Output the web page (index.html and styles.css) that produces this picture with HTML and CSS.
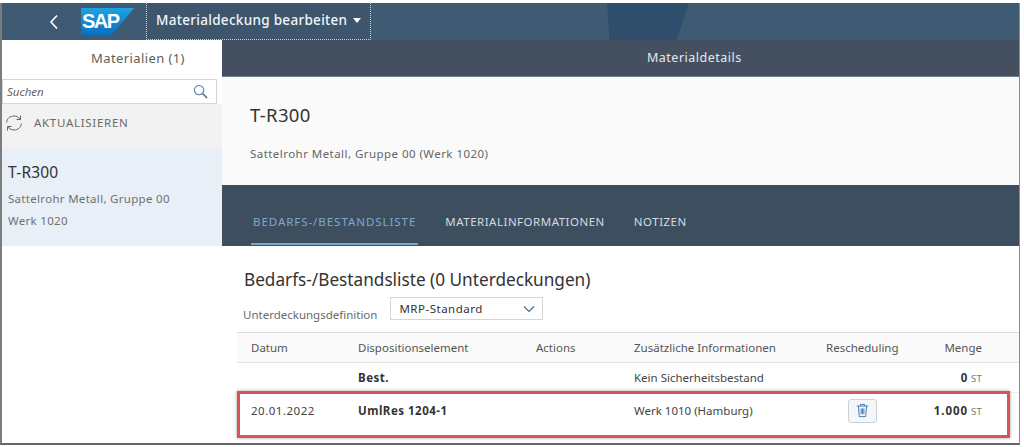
FILE: index.html
```html
<!DOCTYPE html>
<html lang="de">
<head>
<meta charset="utf-8">
<title>Materialdeckung bearbeiten</title>
<link rel="stylesheet" href="styles.css">
</head>
<body>
<div class="frame">
  <header class="shell">
    <svg class="back" viewBox="0 0 10 16" width="10" height="16"><path d="M8 1.500 2 8l6 6.500" fill="none" stroke="#fff" stroke-width="1.600"/></svg>
    <div class="logo"><span class="logo-text">SAP</span></div>
    <div class="app-title">Materialdeckung bearbeiten <span class="caret"></span></div>
    <div class="shell-deco"></div>
  </header>
  <div class="main">
    <aside class="master">
      <div class="master-head">Materialien (1)</div>
      <div class="search">
        <span class="search-text">Suchen</span>
        <svg class="search-icon" viewBox="0 0 16 16" width="15" height="15"><circle cx="6.500" cy="6.500" r="5" fill="none" stroke="#4a7ba6" stroke-width="1.100"/><path d="M10.200 10.200 15 15" stroke="#4a6a85" stroke-width="1.600"/></svg>
      </div>
      <div class="refresh">
        <svg class="refresh-icon" viewBox="0 0 20 20" width="20" height="20"><path d="M2.500 9.500C3 5.500 6 3 10 3c2.700 0 4.800 1.200 6 3.300M17.500 10.500C17 14.500 14 17 10 17c-2.700 0-4.800-1.200-6-3.300" fill="none" stroke="#666" stroke-width="1"/><path d="M16.500 2.500V6.500H12.500M3.500 17.500V13.500H7.500" fill="none" stroke="#666" stroke-width="1"/></svg>
        <span>AKTUALISIEREN</span>
      </div>
      <div class="item">
        <div class="item-title">T-R300</div>
        <div class="item-line">Sattelrohr Metall, Gruppe 00</div>
        <div class="item-line">Werk 1020</div>
      </div>
    </aside>
    <section class="detail">
      <div class="detail-head">Materialdetails</div>
      <div class="object">
        <div class="object-title">T-R300</div>
        <div class="object-sub">Sattelrohr Metall, Gruppe 00 (Werk 1020)</div>
      </div>
      <nav class="tabs">
        <span class="tab tab-active">BEDARFS-/BESTANDSLISTE</span>
        <span class="tab">MATERIALINFORMATIONEN</span>
        <span class="tab">NOTIZEN</span>
      </nav>
      <div class="content">
        <h2 class="list-title">Bedarfs-/Bestandsliste (0 Unterdeckungen)</h2>
        <div class="filter">
          <span class="filter-label">Unterdeckungsdefinition</span>
          <div class="select"><span>MRP-Standard</span>
            <svg viewBox="0 0 12 8" width="12" height="8"><path d="M1 1.500 6 6.500l5-5" fill="none" stroke="#3f6f98" stroke-width="1.200"/></svg>
          </div>
        </div>
        <div class="row row-head">
          <span>Datum</span><span>Dispositionselement</span><span>Actions</span><span>Zusätzliche Informationen</span><span>Rescheduling</span><span class="num">Menge</span>
        </div>
        <div class="row row-stock">
          <span></span><b>Best.</b><span></span><span>Kein Sicherheitsbestand</span><span></span><span class="num"><b>0</b> <small>ST</small></span>
        </div>
        <div class="row row-item">
          <span class="date">20.01.2022</span><b>UmlRes 1204-1</b><span></span><span>Werk 1010 (Hamburg)</span>
          <span class="cell-btn"><span class="trash">
            <svg viewBox="0 0 16 18" width="13" height="15"><path d="M1 3.500h14M5.500 3.500V1.500h5v2M3 3.500 4 16.500h8l1-13M6.300 6.500v7M8 6.500v7M9.700 6.500v7" fill="none" stroke="#3f7cb0" stroke-width="1.200"/></svg>
          </span></span>
          <span class="num"><b class="qty">1.000</b> <small>ST</small></span>
        </div>
      </div>
    </section>
  </div>
  <div class="highlight"></div>
</div>
</body>
</html>
```
FILE: styles.css
```css
* { box-sizing: border-box; }
html, body { margin: 0; background: #fff; overflow: hidden; }
body { height: 447px; font-family: "Noto Sans", "Liberation Sans", sans-serif; color: #333; }
.frame {
  position: relative;
  width: 1020px;
  height: 442px;
  margin-top: 3px;
  border-left: 2px solid #7d7d7d;
  border-right: 1px solid #8a8a8a;
  border-bottom: 2px solid #666;
  display: flex;
  flex-direction: column;
  overflow: hidden;
}
.shell {
  position: relative;
  flex: 0 0 37px;
  background: #3f5b74;
  display: flex;
  align-items: center;
  color: #fff;
}
.back { margin-left: 47px; }
.logo {
  width: 53px;
  height: 27px;
  margin-left: 22px;
  background: linear-gradient(#1ea3e4, #0a6fc2);
  clip-path: polygon(0 0, 100% 0, 58% 100%, 0 100%);
  display: flex;
  align-items: center;
}
.logo-text { font: bold 20px/27px "Liberation Sans", sans-serif; letter-spacing: -1.500px; margin-left: 1px; }
.app-title {
  margin-left: 12px;
  width: 225px;
  height: 37px;
  border: 1px dotted #c9d3dc;
  border-top: 0;
  background: #3d566e;
  font-size: 13.500px;
  font-weight: 500;
  line-height: 34px;
  padding-left: 9px;
  white-space: nowrap;
  color: #f2f5f7;
  letter-spacing: .3px;
}
.caret {
  display: inline-block;
  width: 0;
  height: 0;
  margin: 0 0 2px 2px;
  border: 4px solid transparent;
  border-top: 5px solid #fff;
  border-bottom: 0;
}
.shell-deco {
  position: absolute;
  left: 605px;
  top: 0;
  width: 82px;
  height: 37px;
  background: #2f4e6b;
  clip-path: polygon(0 0, 100% 0, 85% 100%, 3% 100%);
}
.main { flex: 1; display: flex; min-height: 0; }
.master { width: 220px; flex: none; background: #fff; }
.master-head {
  height: 37px;
  padding-left: 89px;
  font-size: 13px;
  line-height: 37px;
  color: #5e5e5e;
  letter-spacing: .4px;
}
.search {
  height: 25px;
  margin: 2px 5px 0 0;
  border: 1px solid #d5d5d5;
  display: flex;
  align-items: center;
  justify-content: space-between;
  padding: 0 8px 0 4px;
  font-size: 11.500px;
  font-style: italic;
  color: #666;
}
.refresh {
  height: 44px;
  background: #f2f2f2;
  display: flex;
  align-items: center;
  gap: 10px;
  padding: 0 0 7px 2px;
  font-size: 11.500px;
  color: #6a6a6a;
  letter-spacing: .7px;
}
.item { height: 98px; background: #e8eff7; padding: 13px 0 0 6px; }
.item-title { font-size: 15.500px; line-height: 22px; color: #333; margin-bottom: 5px; letter-spacing: .2px; }
.item-line { font-size: 11.500px; line-height: 22px; color: #707070; letter-spacing: .3px; }
.detail { flex: 1; min-width: 0; display: flex; flex-direction: column; }
.detail-head {
  flex: 0 0 37px;
  background: #44505f;
  border-bottom: 1px solid #6d8094;
  color: #e6e9ec;
  font-size: 12.500px;
  line-height: 36px;
  letter-spacing: .5px;
  padding-left: 425px;
}
.object { flex: 0 0 108px; background: #fafafa; padding: 26px 0 0 28px; }
.object-title { font-size: 18.500px; line-height: 24px; color: #333; letter-spacing: .3px; }
.object-sub { margin-top: 18px; font-size: 11.500px; line-height: 18px; color: #666; letter-spacing: .45px; }
.tabs {
  flex: 0 0 61px;
  background: #3d4e5f;
  display: flex;
  align-items: flex-start;
  gap: 29px;
  padding: 28px 0 0 31px;
  font-size: 11.500px;
  line-height: 18px;
  color: #d4dae0;
  letter-spacing: .5px;
}
.tab { height: 32px; white-space: nowrap; }
.tab-active {
  color: #7fa8cc;
  border-bottom: 2px solid #6fa8d6;
  margin: 0 -2px;
  padding: 0 2px;
  letter-spacing: .95px;
}
.content { flex: 1; background: #fff; padding: 22px 0 0 0; min-height: 0; }
.list-title { margin: 0 0 0 22px; font-size: 17.200px; font-weight: 400; line-height: 24px; color: #333; white-space: nowrap; }
.filter { display: flex; margin: 5px 0 0 21px; align-items: flex-start; gap: 13px; }
.filter-label { font-size: 11.500px; line-height: 16px; margin-top: 10px; color: #6a6a6a; white-space: nowrap; }
.select {
  width: 153px;
  height: 23px;
  border: 1px solid #d5d5d5;
  display: flex;
  align-items: center;
  justify-content: space-between;
  padding: 0 7px 0 8px;
  font-size: 11.500px;
  color: #333;
  letter-spacing: .5px;
}
.row {
  display: grid;
  grid-template-columns: 107px 178px 98px 192px 1fr 56px;
  align-items: center;
  margin-left: 15px;
  padding: 0 37px 0 14px;
  font-size: 11.500px;
  color: #444;
  white-space: nowrap;
}
.row b { font-weight: 700; color: #333; letter-spacing: .5px; }
.row b.qty { letter-spacing: .9px; }
.row small { font-size: 9.500px; color: #777; letter-spacing: .3px; }
.date { letter-spacing: .5px; }
.num { text-align: right; }
.row-head {
  height: 31px;
  margin-top: 9px;
  background: #fafafa;
  border-top: 1px solid #ddd;
  border-bottom: 1px solid #e4e4e4;
  color: #555;
}
.row-stock { height: 30px; border-bottom: 1px solid #eee; }
.row-item { height: 38px; padding-bottom: 3px; }
.cell-btn { display: flex; padding-left: 22px; }
.trash {
  width: 29px;
  height: 24px;
  border: 1px solid #c9d2da;
  border-radius: 3px;
  background: #f4f6f8;
  display: flex;
  align-items: center;
  justify-content: center;
}
.highlight {
  position: absolute;
  left: 235px;
  top: 388px;
  width: 773px;
  height: 47px;
  border: 3px solid #d9535a;
  box-shadow: 0 0 3px rgba(90, 90, 90, .6);
}
```
